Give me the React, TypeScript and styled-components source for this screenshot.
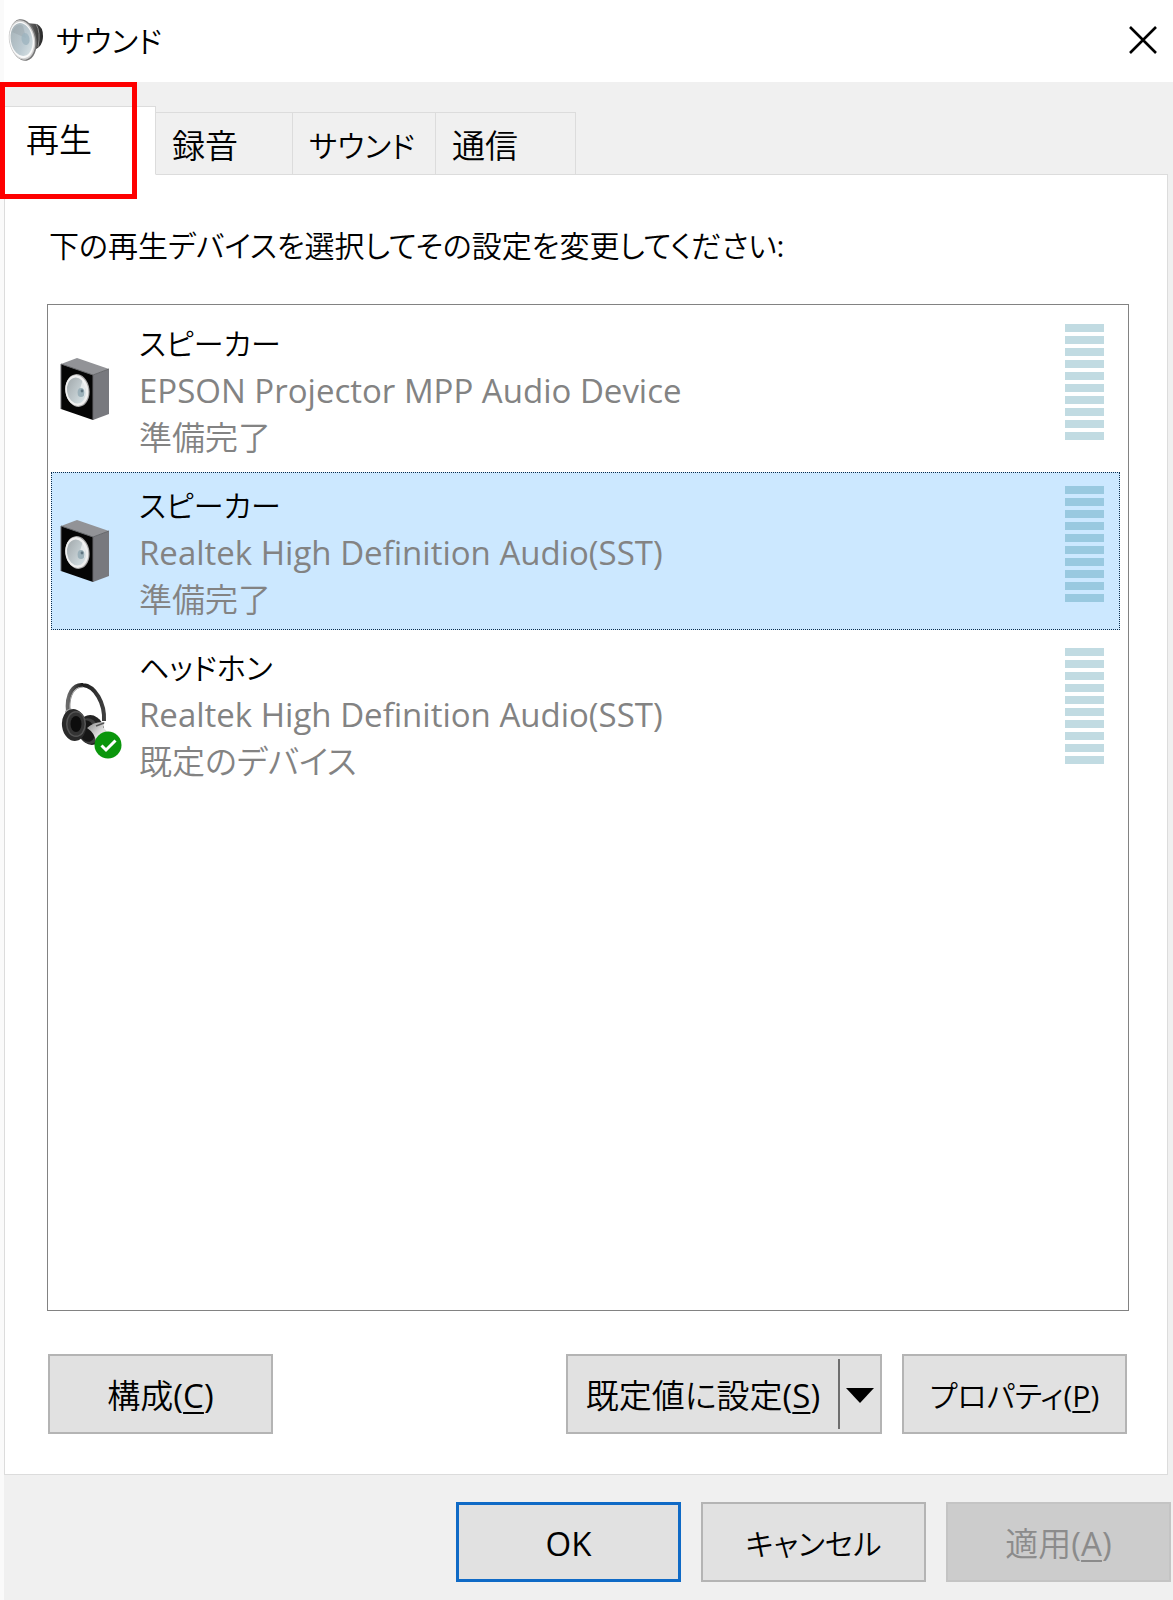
import React, { useState } from "react";
import styled, { createGlobalStyle, css } from "styled-components";

const GlobalStyle = createGlobalStyle`
  *, *::before, *::after { box-sizing: border-box; }
  body {
    margin: 0;
    background: #f0f0f0;
  }
  body, button {
    font-family: "Open Sans", "Noto Sans CJK JP DemiLight", "Noto Sans CJK JP", sans-serif;
    font-size: 33px;
    font-weight: 400;
    line-height: 47px;
    font-feature-settings: "palt", "kern";
    color: #000;
  }
`;

const KANA_SIZE = "30px";

const Dialog = styled.main`
  display: flex;
  flex-direction: column;
  min-height: 100vh;
  border-left: 4px solid #fafafa;
  background: #f0f0f0;
`;

const TitleBar = styled.header`
  display: flex;
  align-items: center;
  gap: 12px;
  height: 82px;
  padding: 0 14px 2px 4px;
  background: #fff;
`;

const Title = styled.h1`
  flex: 1;
  margin: 0;
  font: inherit;
  font-size: ${KANA_SIZE};
`;

const CloseButton = styled.button`
  display: flex;
  padding: 0;
  border: 0;
  background: none;
`;

const TabList = styled.div`
  display: flex;
  align-items: flex-end;
  height: 93px;
`;

const Tab = styled.button<{ $active: boolean; $width: number; $kana?: boolean }>`
  width: ${(p) => p.$width}px;
  height: 63px;
  padding: 4px 0 0 16px;
  border: 1px solid #dcdcdc;
  border-left: 0;
  background: #f0f0f0;
  font-size: ${(p) => (p.$kana ? KANA_SIZE : "33px")};
  text-align: left;
  white-space: nowrap;

  ${(p) =>
    p.$active &&
    css`
      position: relative;
      height: 69px;
      padding: 0 0 2px 22px;
      border-bottom-color: #fff;
      background: #fff;
    `}
`;

const ActiveMark = styled.span`
  position: absolute;
  top: -25px;
  left: -4px;
  width: 137px;
  height: 117px;
  border: 5px solid #fe0000;
  pointer-events: none;
`;

const Panel = styled.section`
  display: flex;
  flex: 1;
  flex-direction: column;
  margin: -1px 5px 0 0;
  padding: 47px 38px 40px 42px;
  border: 1px solid #dcdcdc;
  background: #fff;
`;

const Description = styled.p`
  margin: 0;
  padding-left: 2px;
  font-size: ${KANA_SIZE};
`;

const DeviceList = styled.ul`
  display: flex;
  flex: 1;
  flex-direction: column;
  gap: 4px;
  margin: 35px 0 43px;
  padding: 5px 8px 5px 3px;
  border: 1px solid #828282;
  list-style: none;
`;

const Device = styled.li<{ $selected: boolean }>`
  display: flex;
  align-items: flex-start;
  height: 158px;
  padding: 9px 15px 0 8px;
  border: 1px dotted ${(p) => (p.$selected ? "#0b2c4c" : "transparent")};
  background: ${(p) => (p.$selected ? "#cce8ff" : "#fff")};
  cursor: default;
`;

const DeviceIcon = styled.span`
  display: flex;
  flex: none;
  width: 79px;
  padding-top: 38px;
`;

const DeviceText = styled.div`
  flex: 1;
  color: #838383;
`;

const DeviceName = styled.div`
  color: #000;
  font-size: ${KANA_SIZE};
`;

const Meter = styled.div`
  display: flex;
  flex-direction: column;
  gap: 4px;
  width: 39px;
  padding-top: 4px;
`;

const MeterBar = styled.span<{ $selected: boolean }>`
  height: 8px;
  background: ${(p) => (p.$selected ? "#99c9e0" : "#c1dbe2")};
`;

const ButtonRow = styled.div`
  display: flex;
  gap: 20px;
  padding: 0 2px 0 1px;
`;

const Spacer = styled.span`
  flex: 1;
`;

const Footer = styled.footer`
  display: flex;
  justify-content: flex-end;
  gap: 20px;
  padding: 27px 2px 18px;
`;

const PushButton = styled.button<{ $primary?: boolean; $kana?: boolean }>`
  width: 225px;
  height: 80px;
  padding: 2px 0 0;
  border: ${(p) => (p.$primary ? "3px solid #0f6ac6" : "2px solid #b4b4b4")};
  background: #e1e1e1;
  font-size: ${(p) => (p.$kana ? KANA_SIZE : "33px")};
  white-space: nowrap;

  &:disabled {
    border-color: #c4c4c4;
    background: #cccccc;
    color: #8b8b8b;
  }
`;

const SplitButton = styled.div`
  display: flex;
  align-items: center;
  width: 316px;
  height: 80px;
  border: 2px solid #b4b4b4;
  background: #e1e1e1;
`;

const SplitMain = styled.button`
  flex: 1;
  padding: 2px 0 0;
  border: 0;
  background: none;
  white-space: nowrap;
`;

const SplitArrow = styled.button`
  display: flex;
  align-items: center;
  justify-content: center;
  width: 42px;
  height: 70px;
  padding: 3px 0 0;
  border: 0;
  border-left: 2px solid #6e6e6e;
  background: none;
`;

const AccessKey = styled.u`
  text-decoration-thickness: 2px;
  text-underline-offset: 4px;
`;

function SoundIcon() {
  return (
    <svg width="36" height="44" viewBox="0 0 36 44" aria-hidden="true">
      <defs>
        <linearGradient id="magnet" x1="0" x2="1">
          <stop offset="0" stopColor="#777" />
          <stop offset="1" stopColor="#252525" />
        </linearGradient>
        <linearGradient id="cone" x1="0" y1="0" x2="1" y2="1">
          <stop offset="0" stopColor="#a4b0b5" />
          <stop offset="0.6" stopColor="#bccad1" />
          <stop offset="1" stopColor="#dfe8ea" />
        </linearGradient>
      </defs>
      <path d="M18 5 L29 6 Q35 9 35 18 Q35 25 31 29 L24 34 Z" fill="url(#magnet)" />
      <path d="M28 6 Q33 14 30 29" fill="none" stroke="#8b8b8b" strokeWidth="1" />
      <ellipse cx="15" cy="22" rx="13.4" ry="21" transform="rotate(-10 15 22)" fill="#777" />
      <ellipse cx="14" cy="22" rx="13" ry="20" transform="rotate(-10 14 22)" fill="#cfcfcf" />
      <ellipse cx="13.8" cy="22" rx="12" ry="18.4" transform="rotate(-10 13.8 22)" fill="#f9f9f9" />
      <ellipse cx="13.6" cy="21.5" rx="10.8" ry="16.6" transform="rotate(-10 13.6 21.5)" fill="url(#cone)" />
      <path d="M4 14 Q9 4 15 8 L18 20 Z" fill="#8f9ba0" opacity=".35" />
      <ellipse cx="17.5" cy="21" rx="4" ry="6" transform="rotate(-10 17.5 21)" fill="#9eb4bf" opacity=".8" />
    </svg>
  );
}

function SpeakerIcon() {
  return (
    <svg width="50" height="62" viewBox="0 0 50 62" aria-hidden="true">
      <defs>
        <linearGradient id="coneSmall" x1="0" y1="0" x2="1" y2="1">
          <stop offset="0" stopColor="#9fa6a9" />
          <stop offset="1" stopColor="#dce8ec" />
        </linearGradient>
      </defs>
      <path d="M1 6 L17 0 L49 11 L33 17 Z" fill="#929397" />
      <path d="M33 17 L49 11 V56 L33 62 Z" fill="#78797e" />
      <path d="M1 6 L33 17 V62 L1 51 Z" fill="#050505" />
      <path d="M1 51 V6 L33 17 V62 M33 17 L49 11" fill="none" stroke="#66676a" strokeWidth="1" />
      <ellipse cx="17.5" cy="32.5" rx="12" ry="16.5" transform="rotate(-8 17.5 32.5)" fill="#a5a5a5" />
      <ellipse cx="16.8" cy="32.5" rx="11.5" ry="15.5" transform="rotate(-8 16.8 32.5)" fill="#efefef" />
      <ellipse cx="16.5" cy="32.5" rx="9.5" ry="13" transform="rotate(-8 16.5 32.5)" fill="url(#coneSmall)" />
      <path d="M20 31 L23 21 Q27 28 25 38 Z" fill="#fff" opacity=".55" />
      <ellipse cx="21" cy="34.5" rx="3.4" ry="4.6" fill="#9bb0b9" />
      <circle cx="22" cy="33" r="1.4" fill="#5f7581" />
    </svg>
  );
}

function HeadphonesIcon() {
  return (
    <svg width="64" height="78" viewBox="-2 1 64 78" aria-hidden="true">
      <defs>
        <linearGradient id="band" x1="0" x2="1">
          <stop offset="0" stopColor="#6a6a6a" />
          <stop offset="0.4" stopColor="#1c1c1c" />
          <stop offset="1" stopColor="#3e3e3e" />
        </linearGradient>
        <linearGradient id="arm" x1="0" x2="1" y2="1">
          <stop offset="0" stopColor="#8b8b8b" />
          <stop offset="0.6" stopColor="#e4e4e4" />
          <stop offset="1" stopColor="#aaa" />
        </linearGradient>
      </defs>
      <path
        d="M6 31 C4 12 12 3 21 4 C33 5 43 22 42 40"
        fill="none"
        stroke="url(#band)"
        strokeWidth="4"
      />
      <path d="M8 28 C7 14 13 6 21 6" fill="none" stroke="#909090" strokeWidth="1" />
      <path d="M3 30 L9 27 L12 34 L4 38 Z" fill="#a8a8a8" />
      <ellipse cx="29" cy="49" rx="13" ry="15" transform="rotate(-15 29 49)" fill="#222" />
      <ellipse cx="27" cy="50" rx="10" ry="13" transform="rotate(-15 27 50)" fill="#404040" />
      <ellipse cx="25" cy="50" rx="8" ry="11" transform="rotate(-15 25 50)" fill="#161616" />
      <ellipse cx="12" cy="44" rx="12" ry="16" transform="rotate(-8 12 44)" fill="#2a2a2a" />
      <ellipse cx="14" cy="43" rx="10" ry="13" fill="#555" />
      <ellipse cx="14" cy="43" rx="8.5" ry="11.5" fill="#343434" />
      <ellipse cx="14" cy="43" rx="5.5" ry="8" fill="#0d0d0d" />
      <path d="M25 47 Q32 40 43 41 L41 46 Q49 53 44 62 L34 61 Q33 52 25 47 Z" fill="url(#arm)" />
      <path d="M34 45 L42 42" fill="none" stroke="#555" strokeWidth="1.5" />
      <circle cx="46" cy="64" r="13.5" fill="#0a960c" />
      <path d="M39.5 64.5 L44 69 L53.5 59.5" fill="none" stroke="#fff" strokeWidth="3" />
    </svg>
  );
}

const tabs = [
  { label: "再生", width: 152 },
  { label: "録音", width: 137 },
  { label: "サウンド", width: 143, kana: true },
  { label: "通信", width: 140 },
];

const devices = [
  { name: "スピーカー", driver: "EPSON Projector MPP Audio Device", status: "準備完了", Icon: SpeakerIcon },
  { name: "スピーカー", driver: "Realtek High Definition Audio(SST)", status: "準備完了", Icon: SpeakerIcon },
  { name: "ヘッドホン", driver: "Realtek High Definition Audio(SST)", status: "既定のデバイス", Icon: HeadphonesIcon },
];

const meterSteps = Array.from({ length: 10 }, (_, i) => i);

export default function App() {
  const [selected, setSelected] = useState(1);

  return (
    <>
      <GlobalStyle />
      <Dialog>
        <TitleBar>
          <SoundIcon />
          <Title>サウンド</Title>
          <CloseButton type="button" aria-label="閉じる">
            <svg width="32" height="32" viewBox="0 0 32 32" aria-hidden="true">
              <path d="M3 3 L29 29 M29 3 L3 29" stroke="#000" strokeWidth="2.6" />
            </svg>
          </CloseButton>
        </TitleBar>

        <TabList role="tablist">
          {tabs.map((tab, i) => (
            <Tab
              key={tab.label}
              type="button"
              role="tab"
              aria-selected={i === 0}
              $active={i === 0}
              $width={tab.width}
              $kana={tab.kana}
            >
              {tab.label}
              {i === 0 && <ActiveMark />}
            </Tab>
          ))}
        </TabList>

        <Panel role="tabpanel">
          <Description id="devices-label">
            下の再生デバイスを選択してその設定を変更してください:
          </Description>

          <DeviceList role="listbox" aria-labelledby="devices-label">
            {devices.map(({ name, driver, status, Icon }, i) => (
              <Device
                key={i}
                role="option"
                aria-selected={i === selected}
                $selected={i === selected}
                onClick={() => setSelected(i)}
              >
                <DeviceIcon>
                  <Icon />
                </DeviceIcon>
                <DeviceText>
                  <DeviceName>{name}</DeviceName>
                  <div>{driver}</div>
                  <div>{status}</div>
                </DeviceText>
                <Meter>
                  {meterSteps.map((step) => (
                    <MeterBar key={step} $selected={i === selected} />
                  ))}
                </Meter>
              </Device>
            ))}
          </DeviceList>

          <ButtonRow>
            <PushButton type="button">
              構成(<AccessKey>C</AccessKey>)
            </PushButton>
            <Spacer />
            <SplitButton>
              <SplitMain type="button">
                既定値に設定(<AccessKey>S</AccessKey>)
              </SplitMain>
              <SplitArrow type="button" aria-label="その他の既定値">
                <svg width="28" height="16" viewBox="0 0 28 16" aria-hidden="true">
                  <path d="M0 0 H28 L14 15 Z" fill="#000" />
                </svg>
              </SplitArrow>
            </SplitButton>
            <PushButton type="button" $kana>
              プロパティ(<AccessKey>P</AccessKey>)
            </PushButton>
          </ButtonRow>
        </Panel>

        <Footer>
          <PushButton type="button" $primary>
            OK
          </PushButton>
          <PushButton type="button" $kana>
            キャンセル
          </PushButton>
          <PushButton type="button" disabled>
            適用(<AccessKey>A</AccessKey>)
          </PushButton>
        </Footer>
      </Dialog>
    </>
  );
}
